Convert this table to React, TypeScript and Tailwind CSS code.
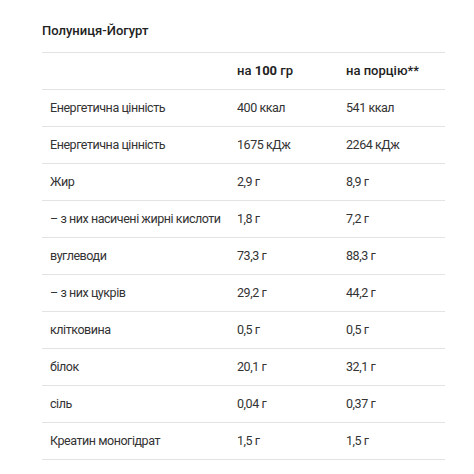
const rows: [string, string, string][] = [
  ['Енергетична цінність', '400 ккал', '541 ккал'],
  ['Енергетична цінність', '1675 кДж', '2264 кДж'],
  ['Жир', '2,9 г', '8,9 г'],
  ['– з них насичені жирні кислоти', '1,8 г', '7,2 г'],
  ['вуглеводи', '73,3 г', '88,3 г'],
  ['– з них цукрів', '29,2 г', '44,2 г'],
  ['клітковина', '0,5 г', '0,5 г'],
  ['білок', '20,1 г', '32,1 г'],
  ['сіль', '0,04 г', '0,37 г'],
  ['Креатин моногідрат', '1,5 г', '1,5 г'],
];

function Row({ cells, head }: { cells: React.ReactNode[]; head?: boolean }) {
  return (
    <div
      className={`grid h-[37px] grid-cols-[195px_109px_99px] items-center whitespace-nowrap border-b border-[#e3e3e3] ${
        head
          ? 'text-[13px] font-medium text-[#222]'
          : 'text-[12.5px] tracking-[-0.45px] text-[#333]'
      }`}
    >
      <div className="pl-2">{cells[0]}</div>
      <div>{cells[1]}</div>
      <div>{cells[2]}</div>
    </div>
  );
}

export default function App() {
  return (
    <div className="h-[474px] w-[474px] bg-white pl-[42px] pt-[22px] font-['Roboto',sans-serif]">
      <h2 className="h-[30px] text-[13px] font-medium leading-[18px] text-[#222]">
        Полуниця-Йогурт
      </h2>
      <div className="w-[403px] border-t border-[#e3e3e3]">
        <Row
          head
          cells={[
            '',
            <>
              на <b className="font-bold">100</b> гр
            </>,
            'на порцію**',
          ]}
        />
        {rows.map((r, i) => (
          <Row key={i} cells={r} />
        ))}
      </div>
    </div>
  );
}
